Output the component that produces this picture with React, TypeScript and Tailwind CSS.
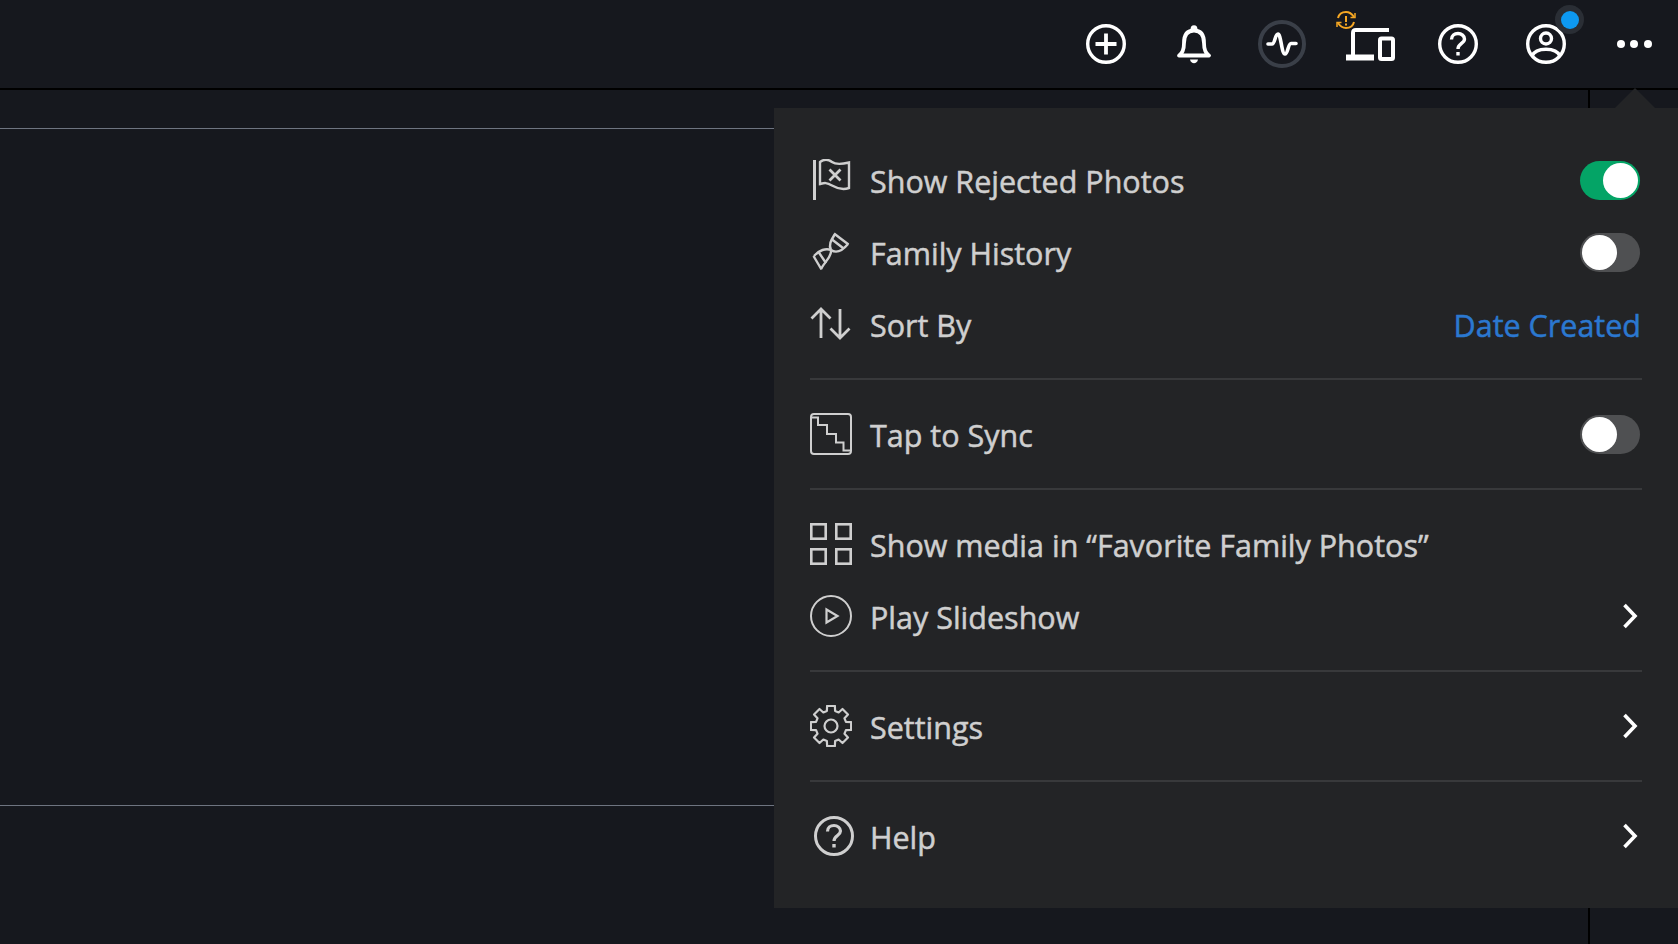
import React from "react";

const gear = (() => {
  const cx = 21, cy = 21, teeth = 8, rOut = 20.5, rIn = 15.5;
  const pts: string[] = [];
  for (let i = 0; i < teeth; i++) {
    const a = (i * 2 * Math.PI) / teeth - Math.PI / 2;
    const list: [number, number][] = [
      [rIn, a - 0.27],
      [rOut, a - 0.19],
      [rOut, a + 0.19],
      [rIn, a + 0.27],
    ];
    for (const [r, t] of list) pts.push(`${(cx + r * Math.cos(t)).toFixed(2)} ${(cy + r * Math.sin(t)).toFixed(2)}`);
  }
  return "M" + pts.join("L") + "Z";
})();

const FlagIcon = () => (
  <svg width="42" height="42" viewBox="0 0 42 42" fill="none" stroke="currentColor" strokeWidth="2.400">
    <path d="M4.500 1V41" strokeWidth="3" />
    <path d="M10 3C14 0 18 0 22 3S33 5 39 3.500V29C33 31 28 30 22 26.500S14 24 10 25Z" />
    <path d="M19.500 10.500L30.500 21.500M30.500 10.500L19.500 21.500" strokeWidth="2.800" />
  </svg>
);
const DnaIcon = () => (
  <svg width="42" height="42" viewBox="0 0 42 42" fill="none" stroke="currentColor" strokeWidth="2.400">
    <path d="M21 19C18 13 22 8 25 3" />
    <path d="M21 19C27 23 33 19 38 13" />
    <path d="M24 2.500L38.500 13.500M22 8.500L33 17" />
    <path d="M21 19C16 17 9 19 4 25" />
    <path d="M21 19C22 26 15 30 11 38" />
    <path d="M3.500 25L11.500 38.500M8.500 21L16 32" />
  </svg>
);
const SortIcon = () => (
  <svg width="42" height="42" viewBox="0 0 42 42" fill="none" stroke="currentColor" strokeWidth="2.800">
    <path d="M11 35V7M1.500 15.500L11 6L20.500 15.500" />
    <path d="M30 6V34M20.500 25.500L30 35L39.500 25.500" />
  </svg>
);
const SyncIcon = () => (
  <svg width="42" height="42" viewBox="0 0 42 42" fill="none" stroke="currentColor" strokeWidth="2">
    <rect x="1" y="1" width="40" height="40" rx="3" />
    <path d="M1 4.500H8V12H17V21H26V29.500H33.500V37.500H41" />
  </svg>
);
const GridIcon = () => (
  <svg width="42" height="42" viewBox="0 0 42 42" fill="none" stroke="currentColor" strokeWidth="2.600">
    <rect x="1.300" y="1.300" width="14.400" height="14.400" />
    <rect x="26.300" y="1.300" width="14.400" height="14.400" />
    <rect x="1.300" y="26.300" width="14.400" height="14.400" />
    <rect x="26.300" y="26.300" width="14.400" height="14.400" />
  </svg>
);
const PlayIcon = () => (
  <svg width="42" height="42" viewBox="0 0 42 42" fill="none" stroke="currentColor" strokeWidth="2">
    <circle cx="21" cy="21" r="20" />
    <path d="M16.500 14.500L27.500 21L16.500 27.500Z" strokeWidth="2.200" />
  </svg>
);
const GearIcon = () => (
  <svg width="42" height="42" viewBox="0 0 42 42" fill="none" stroke="currentColor" strokeWidth="2.200">
    <path d={gear} strokeLinejoin="round" />
    <circle cx="21" cy="21" r="6.500" />
  </svg>
);
const HelpIcon = () => (
  <svg width="42" height="42" viewBox="0 0 42 42" fill="none" stroke="currentColor" strokeWidth="3" className="translate-x-[3px]">
    <circle cx="21" cy="21" r="18.500" />
    <path d="M14.500 16.500C14.500 12.500 17.500 10.500 21 10.500S27.500 13 27.500 16C27.500 20.500 21 20.500 21 26" strokeWidth="3.200" />
    <path d="M19.300 29H22.700V32.500H19.300Z" fill="currentColor" stroke="none" />
  </svg>
);

const Chevron = () => (
  <svg width="16" height="26" viewBox="0 0 16 26" fill="none" stroke="white" strokeWidth="3.600" className="mb-[2px] mr-[4px]">
    <path d="M2.500 2L13 13L2.500 24" />
  </svg>
);

const Toggle = ({ on }: { on?: boolean }) => (
  <div className={`mb-[2px] mr-[2px] flex h-[39px] w-[60px] items-center rounded-full px-[2px] ${on ? "justify-end bg-[#04a466]" : "justify-start bg-[#4f5052]"}`}>
    <div className="h-[35px] w-[35px] rounded-full bg-white" />
  </div>
);

const Row = ({ icon, label, right }: { icon: React.ReactNode; label: string; right?: React.ReactNode }) => (
  <div className="flex h-[72px] items-center">
    <div className="mb-[2px] flex h-[42px] w-[42px] shrink-0 items-center justify-center text-[#cfcfcf]">{icon}</div>
    <div className="ml-[18px] flex-1 text-[30.5px] leading-[40px] text-[#cfcfcf] [-webkit-text-stroke:0.5px_#cfcfcf]">{label}</div>
    {right}
  </div>
);

const Divider = () => <div className="mb-[19px] mt-[17px] h-[2px] bg-[#38393b]" />;

const HeaderBtn = ({ children }: { children: React.ReactNode }) => (
  <div className="relative flex h-[88px] w-[88px] items-center justify-center">{children}</div>
);

export default function App() {
  return (
    <div className="relative h-[944px] w-[1678px] overflow-hidden bg-[#16181e] font-['Open_Sans',sans-serif]">
      <header className="flex h-[90px] items-center justify-end border-b-2 border-[#000000]">
        <HeaderBtn>
          <svg width="42" height="42" viewBox="0 0 42 42" fill="none" stroke="white" strokeWidth="3.400">
            <circle cx="21" cy="21" r="18.300" />
            <path d="M21 10.500V31.500M10.500 21H31.500" strokeWidth="3.800" />
          </svg>
        </HeaderBtn>
        <HeaderBtn>
          <svg width="34" height="42" viewBox="0 0 34 42" fill="none" stroke="white" strokeWidth="3.800">
            <path d="M2 32.500C6 30 7 26 7 20C7 12 10.500 7.500 17 7.500S27 12 27 20C27 26 28 30 32 32.500Z" strokeLinejoin="round" />
            <path d="M14.500 6.500C14.500 2 19.500 2 19.500 6.500" fill="white" strokeWidth="2" />
            <path d="M13 36.500H21C20 41.500 14 41.500 13 36.500Z" fill="white" stroke="none" />
          </svg>
        </HeaderBtn>
        <HeaderBtn>
          <div className="flex h-[48px] w-[48px] items-center justify-center rounded-full border-[4px] border-[#3a3f48]">
            <svg width="32" height="26" viewBox="0 0 32 26" fill="none" stroke="white" strokeWidth="3.600" strokeLinecap="round" strokeLinejoin="round">
              <path d="M2 13H6C9 13 9 3 12 3C15 3 15.500 23 19 23C22 23 22 12.500 25 12.500H30" />
            </svg>
          </div>
        </HeaderBtn>
        <HeaderBtn>
          <svg width="50" height="34" viewBox="0 0 50 34" fill="none" stroke="white" strokeWidth="4">
            <path d="M8 29V6C8 3.500 9 3 11 3H44" />
            <path d="M1 30.500H29" strokeWidth="6" />
            <rect x="35" y="11.500" width="13" height="20.500" rx="1.500" />
          </svg>
          <svg width="20" height="20" viewBox="0 0 20 20" fill="none" stroke="#f5a623" strokeWidth="2" className="absolute left-[10px] top-[10px]">
            <path d="M2 8C3 4 6 2 10 2S16 4 18 7M18 12C17 16 14 18 10 18S4 16 2 13" />
            <path d="M10 6V12M10 13.500V15.500" />
            <path d="M14.500 7.500H19V3M5.500 12.500H1V17" strokeWidth="1.500" />
          </svg>
        </HeaderBtn>
        <HeaderBtn>
          <svg width="42" height="42" viewBox="0 0 42 42" fill="none" stroke="white" strokeWidth="3.400">
            <circle cx="21" cy="21" r="18.300" />
            <path d="M14.500 16.500C14.500 12.500 17.500 10.500 21 10.500S27.500 13 27.500 16C27.500 20.500 21 20.500 21 26" />
            <path d="M19.300 29H22.700V32.500H19.300Z" fill="white" stroke="none" />
          </svg>
        </HeaderBtn>
        <HeaderBtn>
          <svg width="42" height="42" viewBox="0 0 42 42" fill="none" stroke="white" strokeWidth="3.400">
            <circle cx="21" cy="21" r="18.300" />
            <circle cx="21" cy="15.500" r="5.500" />
            <path d="M7 33C11 24 31 24 35 33" />
          </svg>
          <div className="absolute left-[53px] top-[5px] flex h-[29px] w-[29px] items-center justify-center rounded-full bg-[#2a2e35]">
            <div className="h-[18px] w-[18px] rounded-full bg-[#0d99f2]" />
          </div>
        </HeaderBtn>
        <HeaderBtn>
          <div className="flex gap-[5.500px]">
            <div className="h-[8px] w-[8px] rounded-full bg-white" />
            <div className="h-[8px] w-[8px] rounded-full bg-white" />
            <div className="h-[8px] w-[8px] rounded-full bg-white" />
          </div>
        </HeaderBtn>
      </header>

      <main className="flex h-[854px]">
        <div className="w-[1590px] border-r-2 border-[#000000] pt-[38px]">
          <div className="h-[678px] border-y border-[#6e7480]" />
        </div>
      </main>

      <div className="absolute left-[774px] top-[108px] h-[800px] w-[904px] bg-[#232426] px-[36px] pt-[37px]">
        <div className="absolute left-[841px] top-[-20px] h-0 w-0 border-x-[20px] border-b-[20px] border-x-transparent border-b-[#232426]" />
        <Row icon={<FlagIcon />} label="Show Rejected Photos" right={<Toggle on />} />
        <Row icon={<DnaIcon />} label="Family History" right={<Toggle />} />
        <Row icon={<SortIcon />} label="Sort By" right={<span className="mr-[1px] text-[30.5px] leading-[40px] text-[#2b78d0] [-webkit-text-stroke:0.5px_#2b78d0]">Date Created</span>} />
        <Divider />
        <Row icon={<SyncIcon />} label="Tap to Sync" right={<Toggle />} />
        <Divider />
        <Row icon={<GridIcon />} label="Show media in “Favorite Family Photos”" />
        <Row icon={<PlayIcon />} label="Play Slideshow" right={<Chevron />} />
        <Divider />
        <Row icon={<GearIcon />} label="Settings" right={<Chevron />} />
        <Divider />
        <Row icon={<HelpIcon />} label="Help" right={<Chevron />} />
      </div>
    </div>
  );
}
